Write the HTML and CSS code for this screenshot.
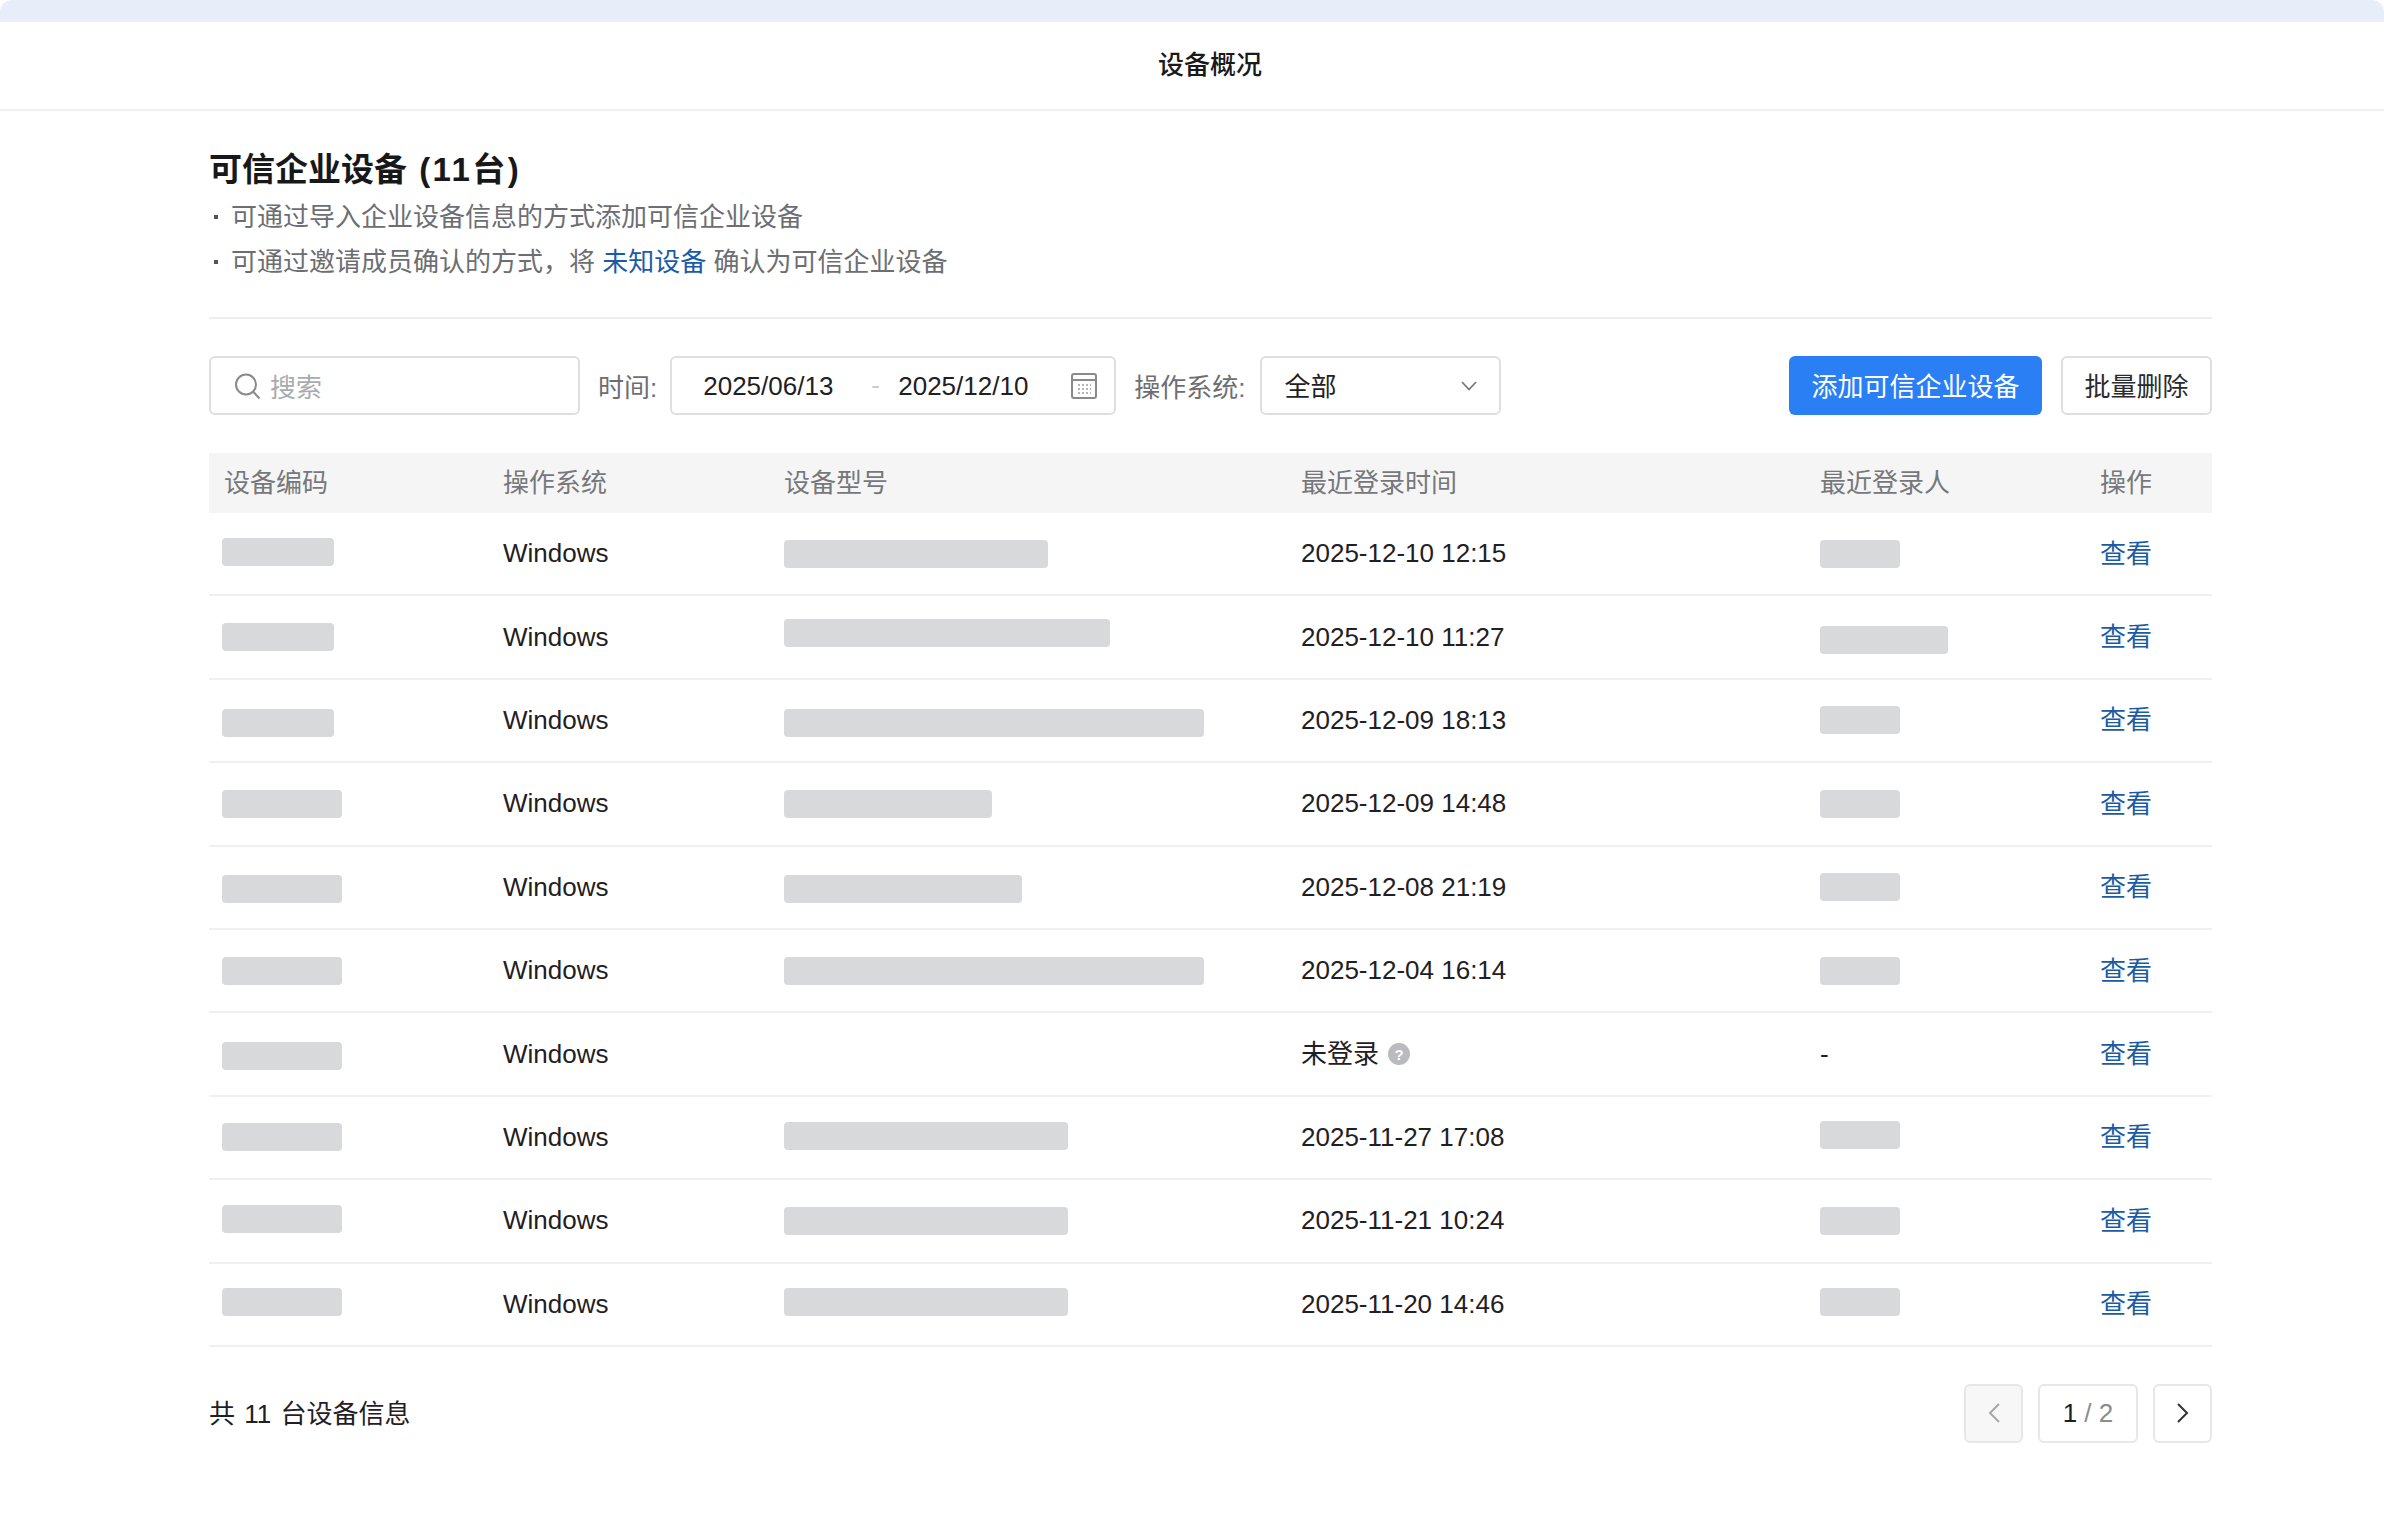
FILE: index.html
```html
<!DOCTYPE html>
<html lang="zh-CN">
<head>
    <meta charset="UTF-8">
    <title>设备概况</title>
    <link rel="stylesheet" href="styles.css">
</head>
<body>
    <div class="top-strip"></div>
    <div class="page-title">设备概况</div>
    <div class="content">
        <h1 class="heading">可信企业设备 <span>(11台)</span></h1>
        <ul class="tips">
            <li>可通过导入企业设备信息的方式添加可信企业设备</li>
            <li>可通过邀请成员确认的方式，将 <a href="#">未知设备</a> 确认为可信企业设备</li>
        </ul>
        <div class="toolbar">
            <div class="box search">
                <svg width="28" height="28" viewBox="0 0 28 28" fill="none" stroke="#8a8a8a" stroke-width="2"><circle cx="13" cy="12.5" r="10"/><path d="M20.5 20l6 6.5"/></svg>
                <span>搜索</span>
            </div>
            <label class="field-label">时间:</label>
            <div class="box date">
                <span class="date-val">2025/06/13</span>
                <span class="date-sep">-</span>
                <span class="date-val">2025/12/10</span>
                <svg class="cal" width="28" height="26" viewBox="0 0 28 26" fill="none" stroke="#8a8a8a" stroke-width="2"><rect x="2" y="1" width="24" height="24" rx="2"/><path d="M2 7h24"/><path stroke="#b5b5b5" stroke-dasharray="2 2" d="M8 12h13M8 16h13M8 20h13"/></svg>
            </div>
            <label class="field-label os-label">操作系统:</label>
            <div class="box select">
                <span>全部</span>
                <svg width="16" height="10" viewBox="0 0 16 10" fill="none" stroke="#777" stroke-width="1.8"><path d="M1 1l7 7.5L15 1"/></svg>
            </div>
            <div class="spacer"></div>
            <button class="btn primary">添加可信企业设备</button>
            <button class="btn">批量删除</button>
        </div>

        <div class="table">
            <div class="row head">
                <div>设备编码</div><div>操作系统</div><div>设备型号</div><div>最近登录时间</div><div>最近登录人</div><div>操作</div>
            </div>
            <div class="row">
                <div><i class="mask" style="width:112px;transform:translateY(-2px)"></i></div><div>Windows</div><div><i class="mask" style="width:264px"></i></div><div>2025-12-10 12:15</div><div><i class="mask" style="width:80px"></i></div><div><a href="#">查看</a></div>
            </div>
            <div class="row">
                <div><i class="mask" style="width:112px"></i></div><div>Windows</div><div><i class="mask" style="width:326px;transform:translateY(-4px)"></i></div><div>2025-12-10 11:27</div><div><i class="mask" style="width:128px;transform:translateY(3px)"></i></div><div><a href="#">查看</a></div>
            </div>
            <div class="row">
                <div><i class="mask" style="width:112px;transform:translateY(3px)"></i></div><div>Windows</div><div><i class="mask" style="width:420px;transform:translateY(3px)"></i></div><div>2025-12-09 18:13</div><div><i class="mask" style="width:80px"></i></div><div><a href="#">查看</a></div>
            </div>
            <div class="row">
                <div><i class="mask" style="width:120px"></i></div><div>Windows</div><div><i class="mask" style="width:208px"></i></div><div>2025-12-09 14:48</div><div><i class="mask" style="width:80px"></i></div><div><a href="#">查看</a></div>
            </div>
            <div class="row">
                <div><i class="mask" style="width:120px;transform:translateY(2px)"></i></div><div>Windows</div><div><i class="mask" style="width:238px;transform:translateY(2px)"></i></div><div>2025-12-08 21:19</div><div><i class="mask" style="width:80px"></i></div><div><a href="#">查看</a></div>
            </div>
            <div class="row">
                <div><i class="mask" style="width:120px"></i></div><div>Windows</div><div><i class="mask" style="width:420px"></i></div><div>2025-12-04 16:14</div><div><i class="mask" style="width:80px"></i></div><div><a href="#">查看</a></div>
            </div>
            <div class="row">
                <div><i class="mask" style="width:120px;transform:translateY(2px)"></i></div><div>Windows</div><div></div>
                <div class="never">未登录<svg width="22" height="22" viewBox="0 0 22 22"><circle cx="11" cy="11" r="11" fill="#b9bbbe"/><text x="11" y="16.5" text-anchor="middle" font-size="15" font-weight="700" fill="#fff" font-family="Liberation Sans">?</text></svg></div>
                <div>-</div><div><a href="#">查看</a></div>
            </div>
            <div class="row">
                <div><i class="mask" style="width:120px"></i></div><div>Windows</div><div><i class="mask" style="width:284px;transform:translateY(-1px)"></i></div><div>2025-11-27 17:08</div><div><i class="mask" style="width:80px;transform:translateY(-2px)"></i></div><div><a href="#">查看</a></div>
            </div>
            <div class="row">
                <div><i class="mask" style="width:120px;transform:translateY(-2px)"></i></div><div>Windows</div><div><i class="mask" style="width:284px"></i></div><div>2025-11-21 10:24</div><div><i class="mask" style="width:80px"></i></div><div><a href="#">查看</a></div>
            </div>
            <div class="row">
                <div><i class="mask" style="width:120px;transform:translateY(-2px)"></i></div><div>Windows</div><div><i class="mask" style="width:284px;transform:translateY(-2px)"></i></div><div>2025-11-20 14:46</div><div><i class="mask" style="width:80px;transform:translateY(-2px)"></i></div><div><a href="#">查看</a></div>
            </div>
        </div>

        <div class="footer">
            <div class="total">共 11 台设备信息</div>
            <div class="pager">
                <div class="page-btn disabled"><svg width="12" height="20" viewBox="0 0 12 20" fill="none" stroke="#a8a8a8" stroke-width="2"><path d="M11 1L2 10l9 9"/></svg></div>
                <div class="page-num"><b>1</b>/ 2</div>
                <div class="page-btn"><svg width="12" height="20" viewBox="0 0 12 20" fill="none" stroke="#333" stroke-width="2"><path d="M1 1l9 9-9 9"/></svg></div>
            </div>
        </div>
    </div>
</body>
</html>
```

FILE: styles.css
```css
*{
    margin: 0;
    padding: 0;
    box-sizing: border-box;
}
body{
    background: #fff;
    color: #1f2024;
    font-family: "Liberation Sans", "Noto Sans CJK SC", sans-serif;
    font-size: 26px;
}
a{
    color: #1a5ba6;
    text-decoration: none;
}
.top-strip{
    height: 22px;
    background: #e8eef9;
    border-radius: 12px 12px 0 0;
}
.page-title{
    height: 89px;
    line-height: 86px;
    padding-left: 36px;
    text-align: center;
    border-bottom: 2px solid #f0f0f0;
    color: #1a1a1a;
    font-weight: 500;
}
.content{
    margin: 0 172px 0 209px;
}
.heading{
    margin-top: 36px;
    font-size: 33px;
    line-height: 46px;
    font-weight: 700;
    color: #17181a;
    word-spacing: 3px;
}
.heading span{
    letter-spacing: 2.4px;
}
.tips{
    list-style: none;
    margin-top: 2px;
    padding-bottom: 33px;
    border-bottom: 2px solid #eeeeee;
    color: #6c6e72;
    line-height: 44.5px;
}
.tips li{
    padding-left: 22px;
    position: relative;
}
.tips li::before{
    content: "";
    position: absolute;
    left: 5px;
    top: 20px;
    width: 4px;
    height: 4px;
    background: #555;
}
.toolbar{
    display: flex;
    align-items: center;
    margin-top: 37px;
    height: 59px;
}
.box{
    height: 59px;
    border: 2px solid #dedfe1;
    border-radius: 6px;
    display: flex;
    align-items: center;
}
.search{
    width: 371px;
    padding-left: 22px;
    color: #a9abaf;
}
.search span{
    margin-left: 9px;
}
.field-label{
    margin: 0 13px 0 18px;
    color: #6c6e72;
}
.os-label{
    margin-right: 15px;
}
.date{
    width: 446px;
    padding-left: 31px;
}
.date-sep{
    width: 64px;
    padding-left: 37px;
    color: #c9cbce;
}
.date-val{
    width: 131px;
    margin-top: 2px;
}
.cal{
    margin-left: 41px;
}
.select{
    width: 241px;
    padding: 0 22px;
    justify-content: space-between;
}
.select span{
    margin-bottom: 2px;
}
.spacer{
    flex: 1;
}
.btn{
    height: 59px;
    width: 151px;
    margin-left: 19px;
    padding-bottom: 3px;
    border: 2px solid #dedfe1;
    border-radius: 6px;
    background: #fff;
    color: #2a2b2e;
    font: inherit;
}
.primary{
    width: 253px;
    border: 0;
    background: #2a7ff5;
    color: #fff;
}
.table{
    margin-top: 38px;
}
.row{
    display: grid;
    grid-template-columns: 278px 281px 517px 519px 280px 128px;
    align-items: center;
    height: 83.4px;
    border-bottom: 2px solid #f0f0f0;
}
.row > div{
    padding-left: 16px;
}
.row a{
    display: block;
    margin-bottom: 5px;
}
.head{
    height: 60px;
    padding-bottom: 6px;
    background: #f5f5f5;
    border-bottom: 0;
    color: #76787c;
}
.head > div:first-child{
    padding-left: 15px;
}
.mask{
    display: block;
    height: 28px;
    border-radius: 4px;
    background: #d8d9db;
}
.row > div:first-child .mask{
    margin-left: -3px;
}
.row > .never{
    display: flex;
    align-items: center;
    gap: 9px;
    padding-bottom: 5px;
}
.never svg{
    margin-top: 4px;
}
.footer{
    display: flex;
    justify-content: space-between;
    align-items: center;
    margin-top: 37px;
}
.total{
    margin-bottom: 4px;
    word-spacing: 2px;
}
.pager{
    display: flex;
    gap: 15px;
}
.page-btn, .page-num{
    width: 59px;
    height: 59px;
    border: 2px solid #e6e7e9;
    border-radius: 6px;
    display: flex;
    align-items: center;
    justify-content: center;
}
.page-num{
    width: 100px;
    color: #8a8c90;
    white-space: pre;
}
.page-num b{
    font-weight: 400;
    color: #1f2024;
    margin-right: 7px;
}
.disabled{
    background: #f7f7f7;
}
```
